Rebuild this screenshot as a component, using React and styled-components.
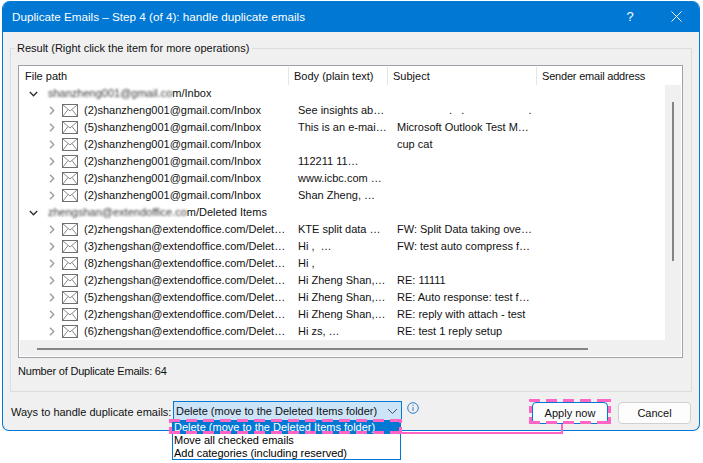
import React from "react";
import styled, { createGlobalStyle } from "styled-components";

const Global = createGlobalStyle`
  html, body { margin: 0; padding: 0; background: #fff; }
  body { width: 703px; height: 463px; overflow: hidden; font-family: "Liberation Sans", Arial, sans-serif; font-size: 11px; color: #111; }
`;
const Page = styled.div`position: relative; width: 703px; height: 463px; padding: 1px 3px 0 2px; box-sizing: border-box;`;
const Win = styled.div`
  height: 430px; box-sizing: border-box; background: #f0f0f0; border: 1px solid #0078d4; border-top: 0;
  border-radius: 8px 8px 7px 7px; overflow: hidden; display: flex; flex-direction: column;
`;
const TitleBar = styled.div`
  flex: 0 0 31px; background: #0078d4; color: #fff; display: flex; align-items: center;
  padding: 0 0 0 9px; font-size: 11.7px;
`;
const TitleText = styled.span`flex: 1;`;
const Help = styled.span`width: 46px; text-align: center; font-size: 13px;`;
const Close = styled.span`width: 46px; display: flex; justify-content: center;`;
const Body = styled.div`flex: 1; padding: 9px 7px 0 7px; display: flex; flex-direction: column;`;
const Group = styled.fieldset`
  margin: 0; padding: 10px 8px 0 7px; height: 351px; box-sizing: border-box; border: 1px solid #dcdcdc;
  display: block; min-width: 0;
`;
const Legend = styled.legend`padding: 0 3px 0 2px; margin-left: -3px; line-height: 14px; height: 14px;`;
const List = styled.div`
  height: 293px; box-sizing: border-box; background: #fff; border: 1px solid #a0a0a8;
  padding: 1px; display: flex; flex-direction: column;
`;
const Head = styled.div`display: grid; grid-template-columns: 269px 99px 149px 1fr; height: 18px;`;
const HeadCell = styled.div`
  padding-left: 5px; line-height: 18px; border-right: ${p => p.$last ? 0 : "1px solid #e5e5e5"};
  letter-spacing: ${p => p.$last ? "-.2px" : 0};
`;
const Middle = styled.div`flex: 1; display: flex; min-height: 0;`;
const Rows = styled.div`flex: 1; overflow: hidden; min-width: 0;`;
const Row = styled.div`
  display: grid; grid-template-columns: 269px 99px 149px; height: 17px; line-height: 17px; white-space: nowrap;
`;
const PathCell = styled.div`display: flex; align-items: center; overflow: hidden; padding-left: ${p => p.$root ? 9 : 29}px;`;
const RootLabel = styled.span`margin-left: 10px;`;
const Blurred = styled.span`filter: blur(1.1px); opacity: .85;`;
const Arrow = styled.span`display: flex; flex: none;`;
const Mail = styled.span`margin: 0 6px 0 7px; display: flex; flex: none;`;
const Cell = styled.div`padding-left: 9px; overflow: hidden; white-space: pre;`;
const VTrack = styled.div`flex: 0 0 16px; background: #f0f0f0; padding: 17px 0 0 7px; box-sizing: border-box;`;
const VThumb = styled.div`width: 2px; height: 159px; background: #858585;`;
const HTrack = styled.div`flex: 0 0 16px; background: #f0f0f0; padding: 8px 0 0 17px; box-sizing: border-box;`;
const HThumb = styled.div`width: 551px; height: 2px; background: #858585;`;
const Count = styled.div`margin: 5px 0 0 0; line-height: 16px; letter-spacing: -.2px;`;
const Footer = styled.div`display: flex; align-items: flex-start; padding: 9px 0 0 1px;`;
const WaysLabel = styled.span`width: 162px; line-height: 20px; padding-top: 1px; white-space: nowrap;`;
const Combo = styled.div`
  width: 229px; height: 20px; box-sizing: border-box; background: #cce4f7; border: 1px solid #0078d4;
  display: flex; align-items: center; padding: 0 3px 0 2px; justify-content: space-between; line-height: 18px; white-space: nowrap;
  svg { flex: none; }
`;
const InfoIcon = styled.span`margin: 1px 0 0 5px; display: flex;`;
const Buttons = styled.div`margin-left: auto; display: flex; gap: 10px; padding: 1px 1px 0 0;`;
const Btn = styled.div`
  width: ${p => p.$primary ? 76 : 73}px; height: 22px; box-sizing: border-box; background: #fdfdfd; text-align: center; line-height: 20px;
  border: 1px solid ${p => p.$primary ? "#0078d4" : "#d0d0d0"}; border-radius: 4px;
`;
const Drop = styled.div`
  position: absolute; left: 172px; top: 420px; width: 229px; height: 40px; box-sizing: border-box;
  border: 1px solid #0078d4; background: #fff; line-height: 13px; color: #000;
`;
const DropItem = styled.div`
  height: 13px; padding-left: 1px; white-space: nowrap;
  background: ${p => p.$sel ? "#0078d4" : "transparent"}; color: ${p => p.$sel ? "#fff" : "#000"};
`;
const Dash = styled.div`
  position: absolute; left: ${p => p.$x}px; top: ${p => p.$y}px; width: ${p => p.$w}px; height: ${p => p.$h}px;
  box-sizing: border-box; pointer-events: none;
  background:
    repeating-linear-gradient(90deg, #ff66c4 0 11px, transparent 11px 17px) 0 0 / 100% 3px no-repeat,
    repeating-linear-gradient(90deg, #ff66c4 0 11px, transparent 11px 17px) 0 100% / 100% 3px no-repeat,
    repeating-linear-gradient(0deg, #ff66c4 0 7px, transparent 7px 11px) 0 0 / 3px 100% no-repeat,
    repeating-linear-gradient(0deg, #ff66c4 0 7px, transparent 7px 11px) 100% 0 / 3px 100% no-repeat;
`;
const Connector = styled.div`
  position: absolute; left: 401px; top: 424px; width: 162px; height: 10px; box-sizing: border-box;
  border: solid #ff66c4; border-width: 0 2px 2px 0;
`;

const MailIcon = () => (
  <svg width="16" height="13" viewBox="0 0 16 13" fill="none" stroke="#6f6f6f" strokeWidth="1">
    <rect x=".5" y=".5" width="15" height="12" />
    <path d="M1 1l7 6 7-6M1 12l5-6.500M15 12l-5-6.500" stroke="#8a8a8a" />
  </svg>
);
const Chevron = ({ open }) => open ? (
  <svg width="9" height="6" viewBox="0 0 9 6" fill="none" stroke="#333" strokeWidth="1.500"><path d="M.8 1l3.700 3.700L8.200 1" /></svg>
) : (
  <svg width="6" height="9" viewBox="0 0 6 9" fill="none" stroke="#a0a0a0" strokeWidth="1.500"><path d="M1 .8l3.700 3.700L1 8.200" /></svg>
);

const G = "shanzheng001@gmail.com/Inbox";
const Z = "zhengshan@extendoffice.com/Delet…";
const data = [
  { root: true, blur: "shanzheng001@gmail.co", rest: "m/Inbox" },
  { n: 2, p: G, b: "See insights ab…", s: "                 .   .                     ." },
  { n: 5, p: G, b: "This is an e-mai…", s: "Microsoft Outlook Test M…" },
  { n: 2, p: G, b: "", s: "cup cat" },
  { n: 2, p: G, b: "112211 11…", s: "" },
  { n: 2, p: G, b: "www.icbc.com …", s: "" },
  { n: 2, p: G, b: "Shan Zheng, …", s: "" },
  { root: true, blur: "zhengshan@extendoffice.co", rest: "m/Deleted Items" },
  { n: 2, p: Z, b: "KTE split data …", s: "FW: Split Data taking ove…" },
  { n: 3, p: Z, b: "Hi ,  …", s: "FW: test auto compress f…" },
  { n: 8, p: Z, b: "Hi ,", s: "" },
  { n: 2, p: Z, b: "Hi Zheng Shan,…", s: "RE: 11111" },
  { n: 5, p: Z, b: "Hi Zheng Shan,…", s: "RE: Auto response: test f…" },
  { n: 2, p: Z, b: "Hi Zheng Shan,…", s: "RE: reply with attach - test" },
  { n: 6, p: Z, b: "Hi zs, …", s: "RE: test 1 reply setup" },
];

export default function App() {
  return (
    <Page>
      <Global />
      <Win>
        <TitleBar>
          <TitleText>Duplicate Emails – Step 4 (of 4): handle duplicate emails</TitleText>
          <Help>?</Help>
          <Close>
            <svg width="11" height="11" viewBox="0 0 11 11" stroke="#fff" strokeWidth="1"><path d="M.5.5l10 10M10.500.5l-10 10" /></svg>
          </Close>
        </TitleBar>
        <Body>
          <Group>
            <Legend>Result (Right click the item for more operations)</Legend>
            <List>
              <Head>
                <HeadCell>File path</HeadCell>
                <HeadCell>Body (plain text)</HeadCell>
                <HeadCell>Subject</HeadCell>
                <HeadCell $last>Sender email address</HeadCell>
              </Head>
              <Middle>
                <Rows>
                  {data.map((r, i) => (
                    <Row key={i}>
                      {r.root ? (
                        <PathCell $root>
                          <Arrow><Chevron open /></Arrow>
                          <RootLabel><Blurred>{r.blur}</Blurred>{r.rest}</RootLabel>
                        </PathCell>
                      ) : (
                        <PathCell>
                          <Arrow><Chevron /></Arrow>
                          <Mail><MailIcon /></Mail>
                          ({r.n}){r.p}
                        </PathCell>
                      )}
                      <Cell>{r.b}</Cell>
                      <Cell>{r.s}</Cell>
                    </Row>
                  ))}
                </Rows>
                <VTrack><VThumb /></VTrack>
              </Middle>
              <HTrack><HThumb /></HTrack>
            </List>
            <Count>Number of Duplicate Emails: 64</Count>
          </Group>
          <Footer>
            <WaysLabel>Ways to handle duplicate emails:</WaysLabel>
            <Combo>
              Delete (move to the Deleted Items folder)
              <svg width="11" height="7" viewBox="0 0 11 7" fill="none" stroke="#505050"><path d="M1 1l4.500 4.500L10 1" /></svg>
            </Combo>
            <InfoIcon>
              <svg width="12" height="12" viewBox="0 0 12 12" fill="none" stroke="#2a7fd0"><circle cx="6" cy="6" r="5.300" /><path d="M6 5v4M6 2.800v1.200" /></svg>
            </InfoIcon>
            <Buttons>
              <Btn $primary>Apply now</Btn>
              <Btn>Cancel</Btn>
            </Buttons>
          </Footer>
        </Body>
      </Win>
      <Drop>
        <DropItem $sel>Delete (move to the Deleted Items folder)</DropItem>
        <DropItem>Move all checked emails</DropItem>
        <DropItem>Add categories (including reserved)</DropItem>
      </Drop>
      <Connector />
      <Dash $x={169} $y={419} $w={233} $h={15} />
      <Dash $x={529} $y={399} $w={82} $h={25} />
    </Page>
  );
}
